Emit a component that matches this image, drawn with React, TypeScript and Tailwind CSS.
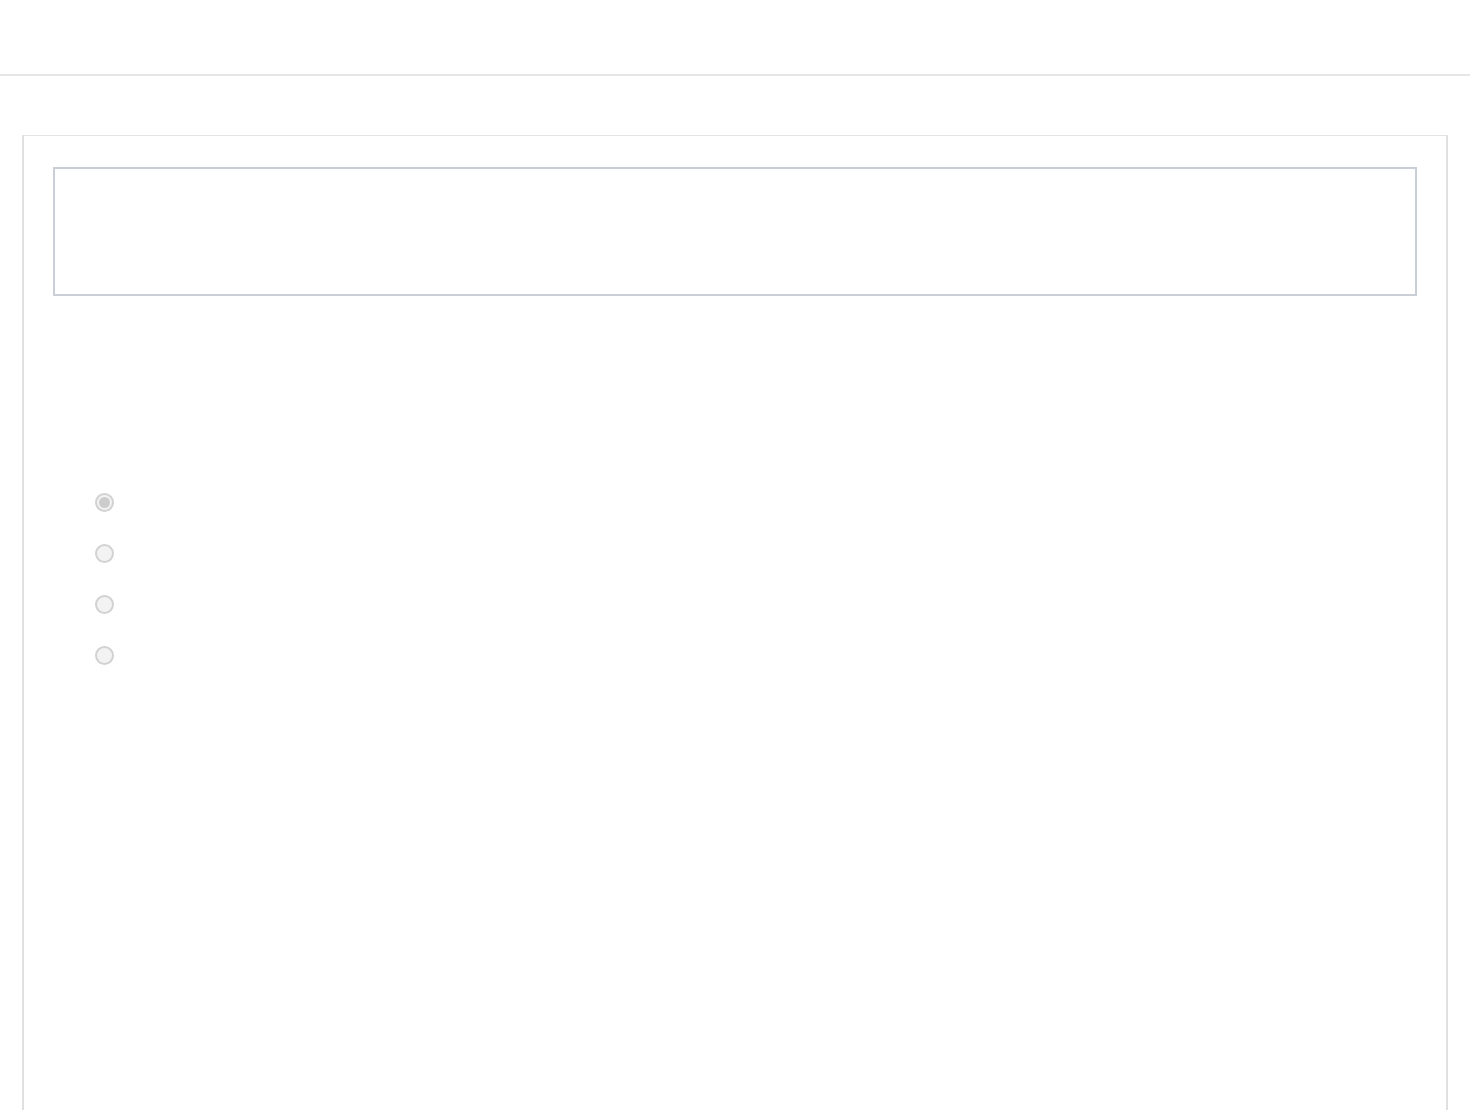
export default function App() {
  const options = [true, false, false, false];
  return (
    <div className="min-h-screen bg-white font-['Liberation_Sans',sans-serif]">
      {/* Top bar */}
      <header className="h-[76px] border-b-2 border-[#e8e5e5]" />

      <main className="pt-[59px] px-[22px]">
        <section className="h-[1100px] border-t border-x-2 border-t-[#e4e4e4] border-x-[#e0e0e0] pt-[31px] px-[29px]">
          {/* Text box */}
          <div className="h-[129px] border-2 border-[#cacfd7]" />

          {/* Options */}
          <div className="mt-[197px] pl-[42px] flex flex-col gap-[32px]">
            {options.map((checked, i) => (
              <div key={i} className="flex items-center">
                <span className="w-[19px] h-[19px] rounded-full border-2 border-[#d2d2d2] bg-[#f3f3f3] flex items-center justify-center">
                  {checked && <span className="w-[11px] h-[11px] rounded-full bg-[#cccccc]" />}
                </span>
              </div>
            ))}
          </div>
        </section>
      </main>
    </div>
  );
}
